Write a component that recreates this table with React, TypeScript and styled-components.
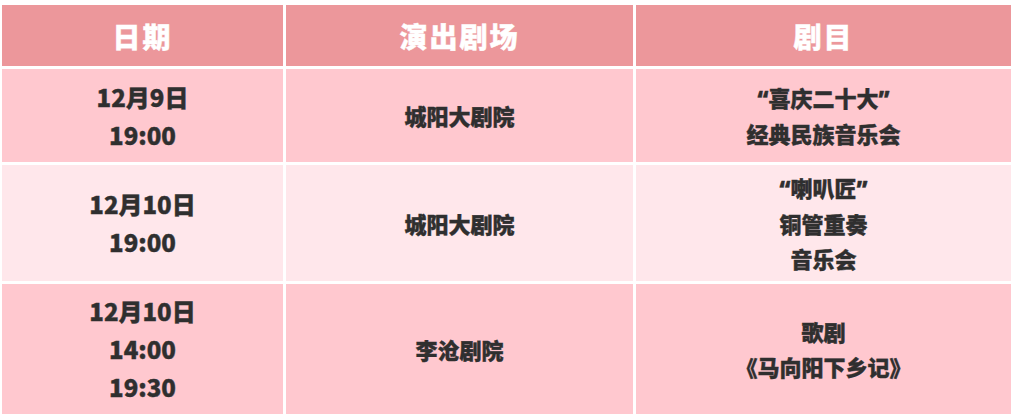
import React from "react";
import styled, { createGlobalStyle } from "styled-components";

const Global = createGlobalStyle`
  html, body { margin: 0; padding: 0; background: #ffffff; }
  body { font-family: "Noto Sans CJK SC", "Noto Sans", sans-serif; }
`;

const Table = styled.div`
  display: grid;
  grid-template-columns: 281px 347px 375px;
  grid-template-rows: 61px 93px 116px 130px;
  gap: 3px;
  padding: 5px 4px 2px 2px;
  width: 1009px;
`;

const HeadCell = styled.div`
  background: #ec979b;
  color: #ffffff;
  display: flex;
  align-items: center;
  justify-content: center;
  font-size: 28px;
  font-weight: 900;
  letter-spacing: 2px;
  -webkit-text-stroke: 0.4px #ffffff;
`;

const Cell = styled.div<{ $tone: "deep" | "light"; $date?: boolean }>`
  background: ${(p) => (p.$tone === "deep" ? "#ffc8cf" : "#ffe7eb")};
  color: #2f2f2f;
  display: flex;
  flex-direction: column;
  align-items: center;
  justify-content: center;
  text-align: center;
  font-weight: 900;
  -webkit-text-stroke: 0.4px #2f2f2f;
  font-size: ${(p) => (p.$date ? "24px" : "22px")};
  line-height: ${(p) => (p.$date ? "38px" : "35px")};
`;

const Line = styled.span`
  display: block;
  white-space: nowrap;
`;

const Quote = styled.span`
  font-family: "Noto Sans", sans-serif;
`;

type Row = { tone: "deep" | "light"; date: string[]; venue: string; show: React.ReactNode[] };

const rows: Row[] = [
  {
    tone: "deep",
    date: ["12月9日", "19:00"],
    venue: "城阳大剧院",
    show: [
      <>
        <Quote>“</Quote>喜庆二十大<Quote>”</Quote>
      </>,
      "经典民族音乐会",
    ],
  },
  {
    tone: "light",
    date: ["12月10日", "19:00"],
    venue: "城阳大剧院",
    show: [
      <>
        <Quote>“</Quote>喇叭匠<Quote>”</Quote>
      </>,
      "铜管重奏",
      "音乐会",
    ],
  },
  {
    tone: "deep",
    date: ["12月10日", "14:00", "19:30"],
    venue: "李沧剧院",
    show: ["歌剧", "《马向阳下乡记》"],
  },
];

export default function App() {
  return (
    <>
      <Global />
      <Table>
        <HeadCell>日期</HeadCell>
        <HeadCell>演出剧场</HeadCell>
        <HeadCell>剧目</HeadCell>
        {rows.map((r, i) => (
          <React.Fragment key={i}>
            <Cell $tone={r.tone} $date>
              {r.date.map((d, j) => (
                <Line key={j}>{d}</Line>
              ))}
            </Cell>
            <Cell $tone={r.tone}>
              <Line>{r.venue}</Line>
            </Cell>
            <Cell $tone={r.tone}>
              {r.show.map((s, j) => (
                <Line key={j}>{s}</Line>
              ))}
            </Cell>
          </React.Fragment>
        ))}
      </Table>
    </>
  );
}
